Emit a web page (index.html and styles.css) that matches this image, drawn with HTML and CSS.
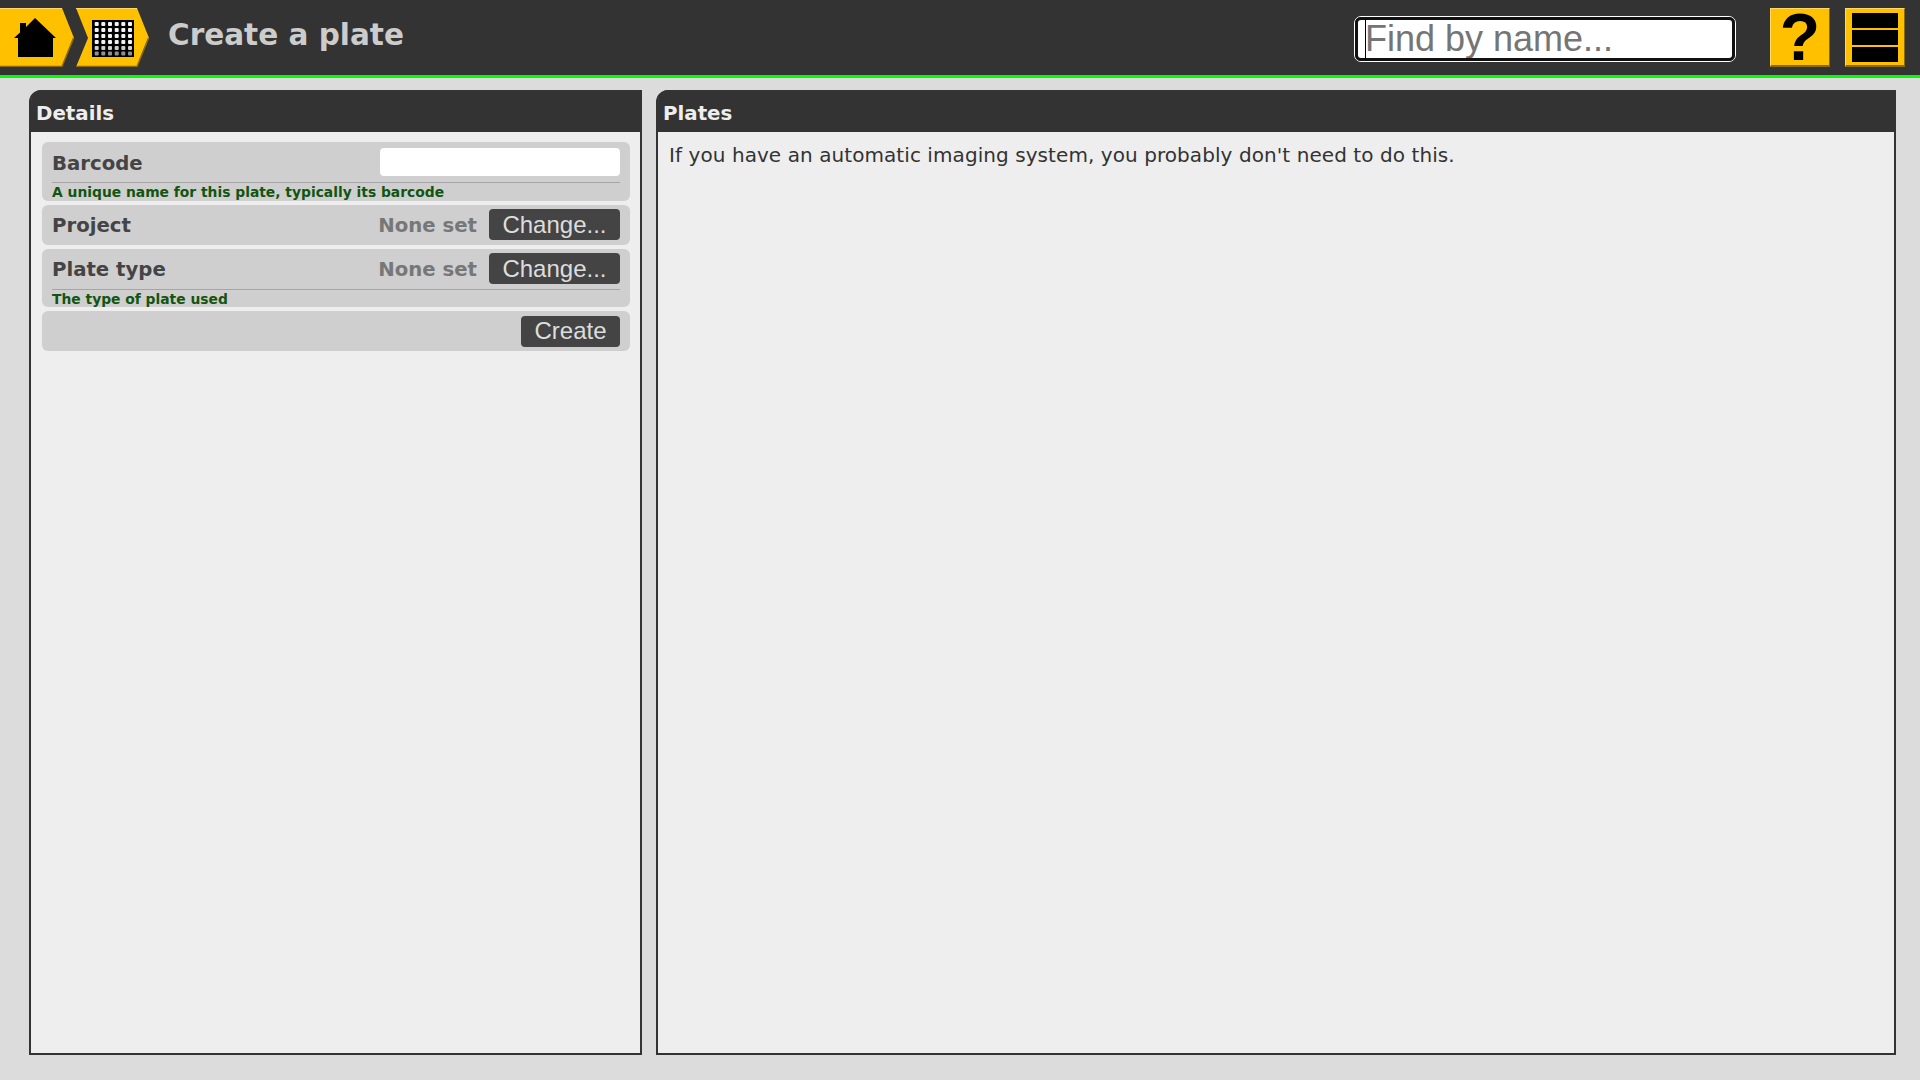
FILE: index.html
```html
<!DOCTYPE html>
<html>
<head>
  <meta charset="utf-8" />
  <title>Create a plate</title>
  <link rel="stylesheet" href="styles.css">
</head>
<body>
  <header class="topbar">
    <nav class="crumbs">
      <a class="crumb" href="#">
        <svg width="74" height="59" viewBox="0 0 74 59">
          <polygon points="0,0 62,0 74,30 62,59 0,59" fill="#ffc000" />
          <polyline points="0,.5 62,.5" stroke="#ffd966" fill="none" />
          <polyline points="0,58.5 62,58.5 73.5,30" stroke="#8a6a00" stroke-width="1.5" fill="none" />
          <path d="M14 30l6-5.5V15h6v4l9-9 21 20h-3v19H18V30z" fill="#000" />
        </svg>
      </a>
      <a class="crumb" href="#">
        <svg width="74" height="59" viewBox="0 0 74 59">
          <polygon points="0,0 61,0 73,30 61,59 0,59 12,30" fill="#ffc000" />
          <polyline points="0,.5 61,.5" stroke="#ffd966" fill="none" />
          <polyline points="0,58.5 61,58.5 72.5,30" stroke="#8a6a00" stroke-width="1.5" fill="none" />
          <rect x="16" y="12" width="42" height="37" fill="#000" />
          <defs>
            <g id="wells" fill="#f2f2f2">
              <rect x="18.7" width="4" height="4" rx="1" />
              <rect x="25.3" width="4" height="4" rx="1" />
              <rect x="32" width="4" height="4" rx="1" />
              <rect x="38.7" width="4" height="4" rx="1" />
              <rect x="45.3" width="4" height="4" rx="1" />
              <rect x="52" width="4" height="4" rx="1" />
            </g>
          </defs>
          <use href="#wells" y="14" />
          <use href="#wells" y="20" />
          <use href="#wells" y="26" />
          <use href="#wells" y="32" />
          <use href="#wells" y="38" opacity="0.85" />
          <use href="#wells" y="43.5" opacity="0.6" />
        </svg>
      </a>
    </nav>
    <h1 class="page-title">Create a plate</h1>
    <div class="find-box">
      <input class="find" type="text" placeholder="Find by name..." />
      <span class="find-caret"></span>
    </div>
    <a class="tool tool-help" href="#">?</a>
    <a class="tool tool-menu" href="#">
      <span></span><span></span><span></span>
    </a>
  </header>

  <main class="panels">
    <section class="panel panel-details">
      <h2 class="panel-head">Details</h2>
      <div class="panel-body">
        <div class="row">
          <div class="row-main">
            <label class="row-label">Barcode</label>
            <input class="row-input" type="text" />
          </div>
          <div class="row-help">A unique name for this plate, typically its barcode</div>
        </div>
        <div class="row">
          <div class="row-main">
            <label class="row-label">Project</label>
            <span class="row-value">None set</span>
            <button type="button" class="btn">Change...</button>
          </div>
        </div>
        <div class="row">
          <div class="row-main">
            <label class="row-label">Plate type</label>
            <span class="row-value">None set</span>
            <button type="button" class="btn">Change...</button>
          </div>
          <div class="row-help">The type of plate used</div>
        </div>
        <div class="row row-actions">
          <button type="button" class="btn">Create</button>
        </div>
      </div>
    </section>
    <section class="panel panel-plates">
      <h2 class="panel-head">Plates</h2>
      <p class="panel-note">If you have an automatic imaging system, you probably don't need to do this.</p>
    </section>
  </main>
</body>
</html>
```

FILE: styles.css
```css
html, body {
  height: 100%;
}
body {
  margin: 0;
  background-color: #dcdcdc;
  font-family: "DejaVu Sans", sans-serif;
  color: #333;
}
a {
  text-decoration: none;
}

/* top bar */
.topbar {
  display: flex;
  align-items: flex-start;
  height: 75px;
  padding-right: 15px;
  background-color: #333;
  border-bottom: 3px solid #00ff00;
}
.crumbs {
  display: flex;
  gap: 2px;
  padding-top: 8px;
}
.crumb {
  display: block;
  height: 59px;
}
.page-title {
  margin: 0 0 0 18px;
  flex: 1;
  color: #ccc;
  font-size: 29.5px;
  font-weight: bold;
  line-height: 71px;
}
.find-box {
  position: relative;
  box-sizing: border-box;
  width: 382px;
  height: 46px;
  margin-top: 16px;
  border: 1px solid #fff;
  border-radius: 7px;
}
.find {
  display: block;
  box-sizing: border-box;
  width: 100%;
  height: 100%;
  padding: 0 0 0 7px;
  border: 3px solid #111;
  border-radius: 6px;
  outline: none;
  font-family: "Liberation Sans", sans-serif;
  font-size: 36px;
  background-color: #fff;
}
.find::placeholder {
  color: #757575;
}
.find-caret {
  position: absolute;
  left: 10px;
  top: 2px;
  width: 1px;
  height: 40px;
  background-color: #000;
}
.tool {
  box-sizing: border-box;
  display: flex;
  flex-direction: column;
  align-items: center;
  justify-content: center;
  width: 60px;
  height: 59px;
  margin-top: 8px;
  background-color: #ffc000;
  border-top: 1px solid #ffd966;
  border-left: 1px solid #ffd966;
  border-right: 1px solid #8a6a00;
  border-bottom: 2px solid #8a6a00;
}
.tool-help {
  margin-left: 34px;
  color: #000;
  font-family: "Liberation Sans", sans-serif;
  font-size: 66px;
  font-weight: bold;
  line-height: 56px;
}
.tool-menu {
  margin-left: 15px;
  gap: 2px;
}
.tool-menu span {
  display: block;
  width: 46px;
  height: 15px;
  background-color: #000;
}

/* panels */
.panels {
  box-sizing: border-box;
  display: flex;
  gap: 14px;
  height: 1002px;
  padding: 12px 24px 25px 29px;
}
.panel {
  box-sizing: border-box;
  display: flex;
  flex-direction: column;
  background-color: #eee;
  border: 2px solid #333;
  border-top-left-radius: 12px;
}
.panel-details {
  width: 613px;
}
.panel-plates {
  flex: 1;
}
.panel-head {
  margin: -2px 0 0;
  padding-left: 5px;
  height: 42px;
  background-color: #333;
  border-top-left-radius: 10px;
  color: #eee;
  font-size: 19.8px;
  font-weight: bold;
  line-height: 47px;
}
.panel-body {
  display: flex;
  flex-direction: column;
  gap: 4px;
  padding: 10px 10px 10px 11px;
}
.panel-note {
  margin: 0;
  padding: 11px 11px 10px;
  color: #333;
  font-size: 20px;
  letter-spacing: 0.07px;
  line-height: 25px;
}

/* form rows */
.row {
  box-sizing: border-box;
  padding: 0 10px;
  background-color: #cfcfcf;
  border-radius: 6px;
}
.row-main {
  display: flex;
  align-items: center;
  height: 40px;
}
.row-label {
  flex: 1;
  padding-top: 2px;
  color: #444;
  font-size: 19.7px;
  font-weight: bold;
}
.row-value {
  margin-right: 12px;
  padding-top: 2px;
  color: #777;
  font-size: 19.7px;
  font-weight: bold;
}
.row-input {
  box-sizing: border-box;
  width: 240px;
  height: 28px;
  border: none;
  border-radius: 4px;
  background-color: #fff;
}
.row-help {
  height: 17.5px;
  border-top: 1px solid #a5a5a5;
  color: #115511;
  font-size: 13.85px;
  font-weight: bold;
  line-height: 19.5px;
}
.row-actions {
  display: flex;
  justify-content: flex-end;
  align-items: center;
  height: 40px;
}
.btn {
  padding: 0 13.5px;
  height: 31px;
  border: none;
  border-radius: 4px;
  background-color: #444;
  color: #ddd;
  font-family: "Liberation Sans", sans-serif;
  font-size: 24px;
  cursor: pointer;
}
```
